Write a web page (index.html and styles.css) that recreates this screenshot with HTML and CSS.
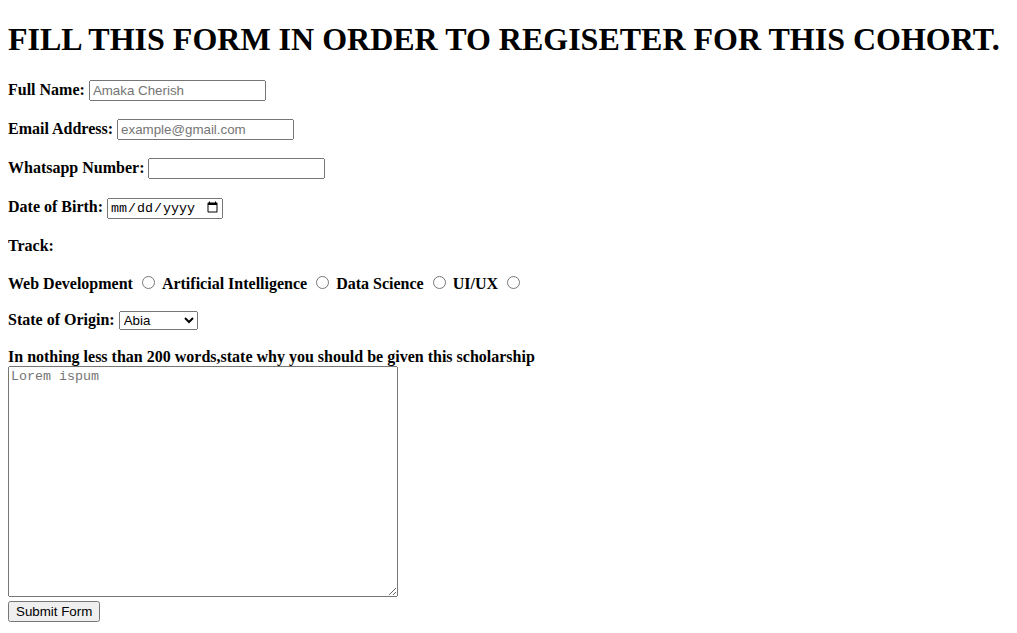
FILE: index.html
```html
<!DOCTYPE html>
<html lang="en">
<head>
<meta charset="utf-8">
<title>Cohort Registration</title>
<link rel="stylesheet" href="styles.css">
</head>
<body>
<h1 class="title">FILL THIS FORM IN ORDER TO REGISETER FOR THIS COHORT.</h1>
<form class="form">
  <p class="row"><label class="lbl" for="fn">Full Name:</label> <input class="field" id="fn" type="text" placeholder="Amaka Cherish"></p>
  <p class="row"><label class="lbl" for="em">Email Address:</label> <input class="field" id="em" type="email" placeholder="example@gmail.com"></p>
  <p class="row"><label class="lbl" for="wa">Whatsapp Number:</label> <input class="field" id="wa" type="tel"></p>
  <p class="row"><label class="lbl" for="dob">Date of Birth:</label> <input class="date" id="dob" type="date"></p>
  <p class="row"><span class="lbl">Track:</span></p>
  <p class="row"><label class="lbl" for="t1">Web Development</label> <input class="radio" id="t1" type="radio" name="track"> <label class="lbl" for="t2">Artificial Intelligence</label> <input class="radio" id="t2" type="radio" name="track"> <label class="lbl" for="t3">Data Science</label> <input class="radio" id="t3" type="radio" name="track"> <label class="lbl" for="t4">UI/UX</label> <input class="radio" id="t4" type="radio" name="track"></p>
  <p class="row"><label class="lbl" for="st">State of Origin:</label> <select class="select" id="st"><option>Abia</option><option>Adamawa</option><option>Akwa Ibom</option><option>Anambra</option></select></p>
  <label class="lbl" for="why">In nothing less than 200 words,state why you should be given this scholarship</label><br>
  <textarea class="area" id="why" placeholder="Lorem ispum"></textarea><br>
  <button class="btn" type="submit">Submit Form</button>
</form>
</body>
</html>
```
FILE: styles.css
```css
body {
  margin: 8px;
  font-family: "Liberation Serif", serif;
  font-size: 16px;
  color: #000;
  background: #fff;
}
.title {
  font-size: 32px;
  font-weight: bold;
  margin: 13px 0 22px;
}
.row {
  margin: 18.2px 0;
}
.lbl {
  font-weight: bold;
}
.field, .select, .btn, .date {
  font-family: "Liberation Sans", Arial, sans-serif;
  font-size: 13.33px;
}
.field {
  width: 177px;
  height: 21px;
  box-sizing: border-box;
}
.field::placeholder {
  color: #757575;
}
.date {
  font-family: "Liberation Mono", monospace;
  width: 116px;
  height: 21px;
  box-sizing: border-box;
}
.select {
  width: 79px;
  height: 19px;
  box-sizing: border-box;
}
.area {
  font-family: "Liberation Mono", monospace;
  font-size: 13.33px;
  width: 390px;
  height: 231px;
  box-sizing: border-box;
}
.btn {
  height: 21px;
  box-sizing: border-box;
}
.radio {
  margin: 3px 3px 0 5px;
}
```
